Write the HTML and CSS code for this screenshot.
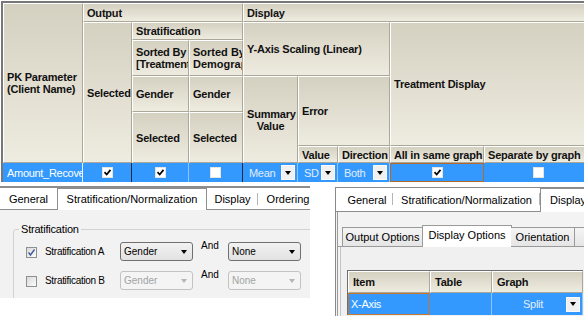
FILE: index.html
```html
<!DOCTYPE html>
<html lang="en">

<head>
  <meta charset="UTF-8">
  <title>PK Parameter Output Settings</title>
  <link rel="stylesheet" href="styles.css">
</head>

<body>
  <div class="grid-wrap">
    <table class="pk-grid">
      <colgroup>
        <col class="w-pk"><col class="w-sel"><col class="w-sort"><col class="w-sort2">
        <col class="w-sum"><col class="w-val"><col class="w-dir"><col class="w-all"><col class="w-sep">
      </colgroup>
      <tr class="r1">
        <th rowspan="6">PK Parameter<br>(Client Name)</th>
        <th colspan="3">Output</th>
        <th colspan="5">Display</th>
      </tr>
      <tr class="r2">
        <th rowspan="5">Selected</th>
        <th colspan="2">Stratification</th>
        <th colspan="3" rowspan="2">Y-Axis Scaling (Linear)</th>
        <th colspan="2" rowspan="4">Treatment Display</th>
      </tr>
      <tr class="r3">
        <th>Sorted By<br>[Treatment]</th>
        <th class="tight">Sorted By<br>Demographics</th>
      </tr>
      <tr class="r4">
        <th>Gender</th>
        <th>Gender</th>
        <th rowspan="3" class="mid">Summary<br>Value</th>
        <th colspan="2" rowspan="2">Error</th>
      </tr>
      <tr class="r5">
        <th rowspan="2">Selected</th>
        <th rowspan="2">Selected</th>
      </tr>
      <tr class="r6">
        <th>Value</th>
        <th>Direction</th>
        <th>All in same graph</th>
        <th>Separate by graph</th>
      </tr>
      <tr class="row-sel">
        <td class="name">Amount_Recovery</td>
        <td class="ctr dark">
          <svg class="cb" viewBox="0 0 11 11"><rect x="0.5" y="0.5" width="10" height="10" fill="#fff" stroke="#e4e4e4"/><path d="M2.5 5.2l2.2 2.3 3.8-4.6" fill="none" stroke="#000" stroke-width="1.7"/></svg>
        </td>
        <td class="ctr">
          <svg class="cb" viewBox="0 0 11 11"><rect x="0.5" y="0.5" width="10" height="10" fill="#fff" stroke="#e4e4e4"/><path d="M2.5 5.2l2.2 2.3 3.8-4.6" fill="none" stroke="#000" stroke-width="1.7"/></svg>
        </td>
        <td class="ctr dark">
          <svg class="cb" viewBox="0 0 11 11"><rect x="0.5" y="0.5" width="10" height="10" fill="#fff" stroke="#e4e4e4"/></svg>
        </td>
        <td><div class="pick">Mean<span class="drop"></span></div></td>
        <td><div class="pick">SD<span class="drop"></span></div></td>
        <td><div class="pick">Both<span class="drop"></span></div></td>
        <td class="ctr focus">
          <svg class="cb" viewBox="0 0 11 11"><rect x="0.5" y="0.5" width="10" height="10" fill="#fff" stroke="#e4e4e4"/><path d="M2.5 5.2l2.2 2.3 3.8-4.6" fill="none" stroke="#000" stroke-width="1.7"/></svg>
        </td>
        <td class="ctr">
          <svg class="cb" viewBox="0 0 11 11"><rect x="0.5" y="0.5" width="10" height="10" fill="#fff" stroke="#e4e4e4"/></svg>
        </td>
      </tr>
    </table>
  </div>

  <div class="bottom">
    <!-- Stratification tab -->
    <div class="dlg dlg-left">
      <div class="tabs">
        <span class="tab t-gen">General</span>
        <span class="tab tab-on t-strat">Stratification/Normalization</span>
        <span class="tab t-disp">Display</span>
        <span class="tab t-ord">Ordering</span>
      </div>
      <div class="page">
        <fieldset class="group">
          <legend>Stratification</legend>
          <div class="strat-row">
            <span class="wcb">
              <svg viewBox="0 0 9 9"><path d="M1.5 4.5l2 2.5 4-5.5" fill="none" stroke="#3f5a9c" stroke-width="1.4"/></svg>
            </span>
            <span class="strat-label">Stratification A</span>
            <span class="combo">Gender</span>
            <span class="and">And</span>
            <span class="combo">None</span>
          </div>
          <div class="strat-row">
            <span class="wcb"></span>
            <span class="strat-label">Stratification B</span>
            <span class="combo off">Gender</span>
            <span class="and">And</span>
            <span class="combo off">None</span>
          </div>
        </fieldset>
      </div>
    </div>

    <!-- Display tab -->
    <div class="dlg dlg-right">
      <div class="tabs tabs-r">
        <span class="tab t-gen2">General</span>
        <span class="tab t-strat2">Stratification/Normalization</span>
        <span class="tab tab-on t-disp2">Display</span>
      </div>
      <div class="page page-r">
        <div class="subtabs">
          <span class="subtab s-out">Output Options</span>
          <span class="subtab subtab-on s-disp">Display Options</span>
          <span class="subtab s-ori">Orientation</span>
          <span class="subtab s-more"></span>
        </div>
        <div class="subpage">
          <table class="opt-grid">
            <colgroup>
              <col class="w-item"><col class="w-table"><col class="w-graph">
            </colgroup>
            <tr>
              <th>Item</th>
              <th>Table</th>
              <th>Graph</th>
            </tr>
            <tr class="row-sel">
              <td class="focus">X-Axis</td>
              <td></td>
              <td><div class="pick split"><span class="pick-text">Split</span><span class="drop"></span></div></td>
            </tr>
          </table>
        </div>
      </div>
    </div>
  </div>
</body>

</html>
```

FILE: styles.css
```css
body {
  margin: 0;
  width: 584px;
  height: 326px;
  overflow: hidden;
  background: #fff;
  font-family: "Liberation Sans", Arial, sans-serif;
  color: #000;
}

/* top grid */

.grid-wrap {
  width: 600px;
  margin: 1px 0 0 1px;
  border-top: 2px solid #777;
  border-left: 2px solid #777;
}

.pk-grid {
  table-layout: fixed;
  border-collapse: separate;
  border-spacing: 0;
  width: 591px;
  font-size: 11px;
}

.w-pk { width: 80px; }
.w-sel { width: 49px; }
.w-sort { width: 57px; }
.w-sort2 { width: 54px; }
.w-sum { width: 55px; }
.w-val { width: 40px; }
.w-dir { width: 52px; }
.w-all { width: 94px; }
.w-sep { width: 110px; }

.r1 { height: 19px; }
.r2 { height: 18px; }
.r3 { height: 36px; }
.r4 { height: 36px; }
.r5 { height: 34px; }
.r6 { height: 17px; }

.pk-grid th,
.opt-grid th {
  box-sizing: border-box;
  padding: 0 3px;
  border-top: 1px solid #fff;
  border-left: 1px solid #fff;
  border-right: 1px solid #aca899;
  border-bottom: 1px solid #aca899;
  background: linear-gradient(#d5d1c1, #eeebe0);
  text-align: left;
  vertical-align: middle;
  font-weight: bold;
  line-height: 12px;
  letter-spacing: -0.2px;
  white-space: nowrap;
  overflow: hidden;
  color: #111;
}

.pk-grid th.mid {
  text-align: center;
}

.pk-grid th.tight {
  letter-spacing: 0;
}

.pk-grid td,
.opt-grid td {
  box-sizing: border-box;
  padding: 0;
  background: #3399ff;
  color: #fff;
  border-right: 1px solid #8fc4f7;
  white-space: nowrap;
  overflow: hidden;
  vertical-align: middle;
}

.pk-grid td {
  height: 19px;
}

.pk-grid td.name {
  padding-left: 4px;
  letter-spacing: -0.3px;
  border-right-color: #e8f2fc;
}

.pk-grid td.dark {
  border-right-color: #1b2b3d;
}

.ctr {
  text-align: center;
  line-height: 0;
}

.cb {
  width: 11px;
  height: 11px;
}

td.focus {
  border: 1px solid #b2692c;
}

.pick {
  display: flex;
  align-items: center;
  justify-content: space-between;
  padding: 0 2px 0 6px;
  color: #e2edfa;
  letter-spacing: -0.3px;
}

.drop {
  box-sizing: border-box;
  width: 14px;
  height: 15px;
  background: #f0f0f0;
  border: 1px solid #fafafa;
  display: flex;
  align-items: center;
  justify-content: center;
}

.drop::after {
  content: "";
  border-left: 3.5px solid transparent;
  border-right: 3.5px solid transparent;
  border-top: 4px solid #000;
}

/* dialogs */

.bottom {
  display: flex;
  align-items: flex-start;
}

.dlg {
  box-sizing: border-box;
  overflow: hidden;
  font-size: 11px;
}

.dlg-left {
  width: 310px;
  height: 112px;
  margin-top: 4px;
  border-top: 2px solid #8d8d8d;
  background: #f2f2f2;
}

.dlg-right {
  flex: 1;
  height: 129px;
  margin: 5px 0 0 25px;
  border-top: 1px solid #8a8a8a;
  border-left: 1px solid #8a8a8a;
  background: #f2f2f2;
}

.tabs {
  display: flex;
  align-items: flex-end;
  height: 21px;
  background: #fff;
  border-bottom: 1px solid #8e8e8e;
}

.tab {
  box-sizing: border-box;
  flex: none;
  height: 19px;
  line-height: 18px;
  text-align: center;
  white-space: nowrap;
  position: relative;
}

.tab::after {
  content: "";
  position: absolute;
  right: 0;
  top: 3px;
  height: 12px;
  border-right: 1px solid #b5b5b5;
}

.tab-on {
  line-height: 20px;
  margin-bottom: -1px;
  height: 22px;
  background: #fff;
  border: 1px solid #8e8e8e;
  border-bottom: none;
}

.tab-on::after,
.t-gen::after {
  display: none;
}

.t-gen { width: 57px; }
.t-strat { width: 150px; }
.t-disp { width: 51px; }
.t-ord { width: 60px; }

.page {
  padding-top: 13px;
}

.group {
  width: 330px;
  margin: 0 0 0 13px;
  padding: 0;
  border: 1px solid #d2d2d2;
  border-radius: 3px;
}

.group legend {
  margin-left: 5px;
  padding: 0 2px;
  line-height: 13px;
  letter-spacing: -0.2px;
}

.strat-row {
  display: flex;
  align-items: center;
  height: 19px;
  margin-top: 6px;
  margin-bottom: 10px;
  font-size: 10px;
}

.strat-row + .strat-row {
  margin-top: 0;
}

.wcb {
  box-sizing: border-box;
  width: 11px;
  height: 11px;
  margin: 1px 0 0 12px;
  border: 1px solid #8e8f8f;
  background: linear-gradient(135deg, #dadada, #fbfbfb);
  display: flex;
  align-items: center;
  justify-content: center;
}

.wcb svg {
  width: 9px;
  height: 9px;
}

.strat-label {
  width: 75px;
  margin-left: 8px;
  letter-spacing: -0.3px;
}

.combo {
  box-sizing: border-box;
  width: 73px;
  height: 19px;
  border: 1px solid #707070;
  border-radius: 3px;
  background: linear-gradient(#f2f2f2, #e2e2e2);
  display: flex;
  align-items: center;
  justify-content: space-between;
  padding: 0 5px 0 3px;
}

.combo::after {
  content: "";
  border-left: 3.5px solid transparent;
  border-right: 3.5px solid transparent;
  border-top: 4px solid #000;
}

.combo.off {
  border-color: #c3c3c3;
  background: #f4f4f4;
  color: #a3a3a3;
}

.combo.off::after {
  border-top-color: #b5b5b5;
}

.and {
  align-self: flex-start;
  width: 27px;
  margin-top: -2px;
  padding-left: 8px;
}

/* right dialog */

.tabs-r {
  height: 23px;
}

.t-gen2 { width: 52px; margin-left: 5px; }
.t-strat2 { width: 147px; }
.t-disp2 { width: 60px; text-align: left; padding-left: 9px; }

.tabs-r .tab {
  line-height: 20px;
  height: 21px;
}

.tabs-r .tab-on {
  height: 24px;
  line-height: 22px;
}

.page-r {
  margin-left: 1px;
  padding-top: 0;
  height: 104px;
  border-left: 1px solid #9a9a9a;
  background: #f3f3f3;
}

.subtabs {
  display: flex;
  align-items: flex-end;
  height: 34px;
  padding-left: 4px;
  border-bottom: 1px solid #9a9a9a;
}

.subtab {
  box-sizing: border-box;
  flex: none;
  height: 19px;
  line-height: 18px;
  text-align: center;
  white-space: nowrap;
  border: 1px solid #9a9a9a;
  border-bottom: none;
  border-left: none;
  background: linear-gradient(#f4f4f4, #e5e5e5);
}

.s-out { width: 81px; border-left: 1px solid #9a9a9a; }
.s-disp { width: 90px; }
.s-ori { width: 64px; }
.s-more { width: 20px; }

.subtab-on {
  height: 22px;
  line-height: 19px;
  margin: 0 -1px -1px;
  border-left: 1px solid #9a9a9a;
  background: #fff;
}

.subpage {
  margin-left: 2px;
  padding: 23px 0 0 6px;
  height: 70px;
  box-sizing: border-box;
  border-left: 1px solid #c4c4c4;
  background: #f0f0f0;
}

.opt-grid {
  table-layout: fixed;
  border-collapse: separate;
  border-spacing: 0;
  width: 236px;
  font-size: 11px;
  border-top: 1px solid #6e6e6e;
  border-left: 1px solid #6e6e6e;
}

.w-item { width: 82px; }
.w-table { width: 62px; }
.w-graph { width: 91px; }

.opt-grid th {
  height: 22px;
  padding-left: 4px;
}

.opt-grid td {
  height: 22px;
}

.opt-grid td.focus {
  padding-left: 2px;
  border-color: #c9772e;
  letter-spacing: -0.3px;
}

.split {
  padding: 0 2px 0 8px;
}

.pick-text {
  flex: 1;
  text-align: center;
}
```
